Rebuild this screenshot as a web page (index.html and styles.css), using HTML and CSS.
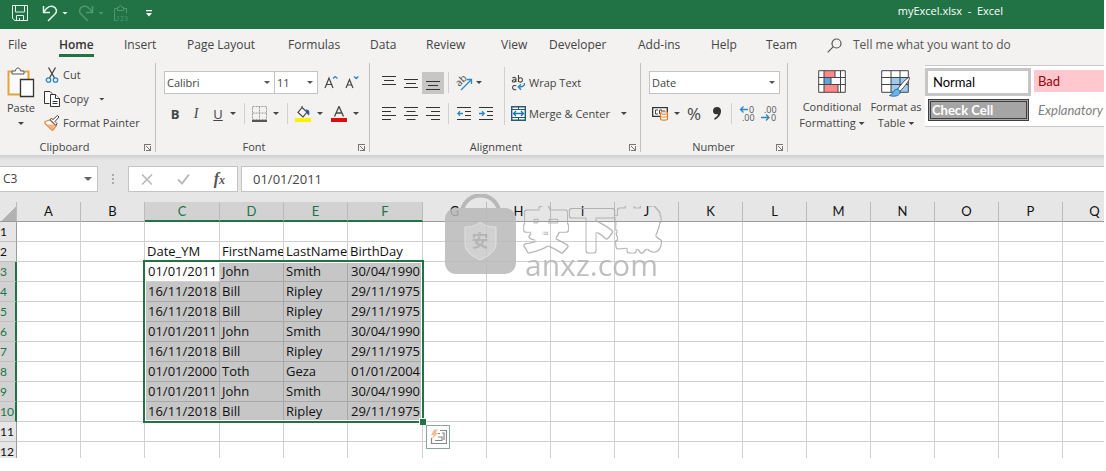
FILE: index.html
```html
<!DOCTYPE html>
<html lang="en">
<head>
<meta charset="utf-8">
<title>myExcel.xlsx - Excel</title>
<link rel="stylesheet" href="styles.css">
</head>
<body>
<div class="app">
  <header class="titlebar">
    <div class="quick">
      <button class="icon-btn" aria-label="Save"><svg width="16" height="16" viewBox="0 0 16 16" fill="none" stroke="#e6f5ec"><path d="M.5.5h15v15H3L.5 13.500z"/><path d="M3.500.500v6.500h9V.500M4.500 15.500v-5h7v5M7.500 13v2.500"/></svg></button>
      <button class="icon-btn undo" aria-label="Undo"><svg width="16" height="17" viewBox="0 0 16 17" fill="none" stroke="#e6f5ec" stroke-width="1.500"><path d="M1.500 1v6.500H8M1.500 7.500C4.500 2.500 8 .500 11 1.500c3.500 1.200 4.500 5 2 7.500L6 16"/></svg><i class="caret"></i></button>
      <button class="icon-btn redo" aria-label="Redo"><svg width="16" height="17" viewBox="0 0 16 17" fill="none" stroke="#509771" stroke-width="1.500"><path d="M14.500 1v6.500H8M14.500 7.500C11.500 2.500 8 .500 5 1.500 1.500 2.700.500 6.500 3 9l7 7"/></svg><i class="caret"></i></button>
      <button class="icon-btn paste-values" aria-label="Paste values"><svg width="15" height="17" viewBox="0 0 15 17" fill="none" stroke="#509771"><path d="M3.500 3.500h-3v12H3M9.500 3.500h3V8M3.500 5.500v-3H5c0-2.500 3-2.500 3 0h1.500v3z"/><text x="2" y="16" font-family="Open Sans" font-size="7" fill="#509771" stroke="none">123</text></svg></button>
      <button class="icon-btn" aria-label="Customize toolbar"><svg width="6" height="7" viewBox="0 0 6 7" fill="#fff"><path d="M0 0h6v1.200H0zM0 3h6L3 6.500z"/></svg></button>
    </div>
    <h1 class="doc-title">myExcel.xlsx&nbsp; -&nbsp; Excel</h1>
  </header>

  <nav class="tabs">
    <a href="#">File</a><a href="#" class="active">Home</a><a href="#">Insert</a><a href="#">Page Layout</a><a href="#">Formulas</a><a href="#">Data</a><a href="#">Review</a><a href="#">View</a><a href="#">Developer</a><a href="#">Add-ins</a><a href="#">Help</a><a href="#">Team</a>
    <button class="tell-me"><svg width="15" height="15" viewBox="0 0 15 15" fill="none" stroke="#555" stroke-width="1.200"><circle cx="9.500" cy="5.500" r="4.500"/><path d="M6.300 8.700.700 14.300"/></svg>Tell me what you want to do</button>
  </nav>

  <section class="ribbon">
    <div class="group clipboard">
      <div class="clip-body">
        <button class="big paste"><svg width="28" height="31" viewBox="0 0 28 31"><path d="M5.500 4.500h-4v23H13M17.500 4.500h4V12" fill="none" stroke="#e8a33d" stroke-width="2"/><path d="M3 6h17v6h-8v14H3z" fill="#fafafa"/><path d="M5 7V4h3.500c0-4 5-4 5 0H17v3z" fill="#fff" stroke="#555"/><path d="M13.500 12.500h13v17h-13z" fill="#fff" stroke="#333" stroke-width="1.300"/></svg><span>Paste</span><i class="caret"></i></button>
        <div class="clip-list">
          <button><svg width="16" height="16" viewBox="0 0 16 16" fill="none"><path d="M4.500.500 10.500 11M11.500.500 5.500 11" stroke="#444" stroke-width="1.300"/><circle cx="4.500" cy="13" r="2.200" stroke="#2b88c4" stroke-width="1.300"/><circle cx="11.500" cy="13" r="2.200" stroke="#2b88c4" stroke-width="1.300"/></svg>Cut</button>
          <button><svg width="16" height="16" viewBox="0 0 16 16" fill="#fff" stroke="#333"><path d="M5.500 12.500h-5V.500H6l2 2v2"/><path d="M6.500 3.500h5l4 4v8h-9z"/><path d="M11.500 3.500v4h4M8.500 10.500h5M8.500 12.500h5"/></svg>Copy<i class="caret"></i></button>
          <button><svg width="16" height="16" viewBox="0 0 16 16"><path d="M1 6.500 6 5l6 6-3.500 4.500L1 8.500z" fill="#fff" stroke="#e8873d" stroke-width="1.300"/><path d="M3 9.500h8L8.500 15z" fill="#f4b183"/><path d="m6 4.500 6 6 1-2-2-2 4-4.500-1.500-1.500L9 4.500l-1.500-1z" fill="#fff" stroke="#444"/></svg>Format Painter</button>
        </div>
      </div>
      <footer>Clipboard<i class="launcher"></i></footer>
    </div>

    <div class="group font">
      <div class="rows">
        <div class="row">
          <label class="combo wide"><select aria-label="Font"><option>Calibri</option></select></label><label class="combo narrow"><select aria-label="Font size"><option>11</option></select></label>
          <button class="tool grow" aria-label="Increase font size"><svg width="14" height="14" viewBox="0 0 14 14" fill="none"><path d="m1 12 4-10 4 10M2.500 8.500h5" stroke="#444" stroke-width="1.200"/><path d="m9 2.500 2.200-2 2.200 2" stroke="#2b88c4" stroke-width="1.300"/></svg></button>
          <button class="tool" aria-label="Decrease font size"><svg width="14" height="14" viewBox="0 0 14 14" fill="none"><path d="m1 12 3.500-8.500L8 12M2.300 9h4.400" stroke="#444" stroke-width="1.200"/><path d="m9 .500 2.200 2 2.200-2" stroke="#2b88c4" stroke-width="1.300"/></svg></button>
        </div>
        <div class="row font-tools">
          <button class="tool bold">B</button><button class="tool italic">I</button><button class="tool under">U</button><i class="caret"></i><i class="rule"></i>
          <button class="tool" aria-label="Borders"><svg width="15" height="16" viewBox="0 0 15 16" fill="none"><path d="M.500.500h14v13H.500zM7.500.500v13M.500 7h14" stroke="#999" stroke-dasharray="2 1"/><path d="M0 15h15" stroke="#222" stroke-width="1.500"/></svg></button><i class="caret"></i><i class="rule"></i>
          <button class="tool" aria-label="Fill color"><svg width="16" height="16" viewBox="0 0 16 16" fill="none"><path d="M7 1.500 3 6.500l5 4.500 4-5-5-4.500V0" stroke="#444" stroke-width="1.200"/><path d="M11 3.500c3 0 4 2 3 6-2-1-2.500-3-3-6z" fill="#245a94"/><path fill="#ffef00" d="M0 12h16v4H0z"/></svg></button><i class="caret"></i>
          <button class="tool" aria-label="Font color"><svg width="16" height="16" viewBox="0 0 16 16" fill="none"><path d="m3.500 10.500 4.500-10 4.500 10M5 7h6" stroke="#444" stroke-width="1.300"/><path fill="#e00b0b" d="M0 12h16v4H0z"/></svg></button><i class="caret"></i>
        </div>
      </div>
      <footer>Font<i class="launcher"></i></footer>
    </div>

    <div class="group alignment">
      <div class="align-body">
        <div class="rows">
          <div class="row align-tools">
            <button class="tool" aria-label="Top align"><svg class="lines" viewBox="0 0 14 14"><path d="M0 .500h14M2 4.500h10M0 8.500h14"/></svg></button>
            <button class="tool" aria-label="Middle align"><svg class="lines" viewBox="0 0 14 14"><path d="M0 3.500h14M2 7.500h10M0 11.500h14"/></svg></button>
            <button class="tool on" aria-label="Bottom align"><svg class="lines" viewBox="0 0 14 14"><path d="M0 5.500h14M2 9.500h10M0 13.500h14"/></svg></button>
            <i class="rule"></i>
            <button class="tool" aria-label="Orientation"><svg width="17" height="17" viewBox="0 0 17 17" fill="none"><text x="0" y="11" transform="rotate(-45 4 8)" font-family="Open Sans" font-size="10" fill="#444">ab</text><path d="M5 16 15 6M11 5.500h4.500V10" stroke="#2b88c4" stroke-width="1.300"/></svg></button><i class="caret"></i>
          </div>
          <div class="row align-tools">
            <button class="tool" aria-label="Align left"><svg class="lines" viewBox="0 0 14 14"><path d="M0 .500h14M0 4.500h9M0 8.500h14M0 12.500h9"/></svg></button>
            <button class="tool" aria-label="Center"><svg class="lines" viewBox="0 0 14 14"><path d="M0 .500h14M2.500 4.500h9M0 8.500h14M2.500 12.500h9"/></svg></button>
            <button class="tool" aria-label="Align right"><svg class="lines" viewBox="0 0 14 14"><path d="M0 .500h14M5 4.500h9M0 8.500h14M5 12.500h9"/></svg></button>
            <i class="rule"></i>
            <button class="tool" aria-label="Decrease indent"><svg class="lines" viewBox="0 0 14 14"><path d="M0 .500h14M8 4.500h6M8 8.500h6M0 12.500h14"/><path class="blue" d="M6 6.500H1M3 4.200.800 6.500 3 8.800"/></svg></button>
            <button class="tool" aria-label="Increase indent"><svg class="lines" viewBox="0 0 14 14"><path d="M0 .500h14M8 4.500h6M8 8.500h6M0 12.500h14"/><path class="blue" d="M0 6.500h5M3 4.200l2.200 2.300L3 8.800"/></svg></button>
          </div>
        </div>
        <div class="rows wraps">
          <button class="row labelled"><svg width="15" height="16" viewBox="0 0 15 16" fill="none"><g stroke="#444" stroke-width="1.100"><path d="M1.500 3c1.500-1 3.500-.800 3.500 1v3M5 4.500c-5 0-4 2.500-2.500 2.500S5 6 5 5"/><path d="M7.500 0v7M7.500 4c1-2 4-1.500 4 1s-3 2.800-4 1M5.300 10.800c-5-1.800-5 5.200 0 3.700"/></g><path d="M13.500 8c.5 3-2 4-6 4M10 9.300 7.300 12 10 14.700" stroke="#2b88c4" stroke-width="1.400"/></svg>Wrap Text</button>
          <button class="row labelled"><svg width="15" height="15" viewBox="0 0 15 15" fill="none"><path d="M.700.700h13.600v13.600H.700z" fill="#fff" stroke="#245a74" stroke-width="1.400"/><path d="M1 3.500h13M1 11.500h13M7.500 1v2.500M7.500 11.500V14" stroke="#245a74"/><path d="M2.500 7.500h10M5 5 2.500 7.500 5 10M10 5l2.500 2.500L10 10" stroke="#1874b8" stroke-width="1.400"/></svg>Merge &amp; Center<i class="caret"></i></button>
        </div>
      </div>
      <footer>Alignment<i class="launcher"></i></footer>
    </div>

    <div class="group number">
      <div class="rows">
        <div class="row"><label class="combo full"><select aria-label="Number format"><option>Date</option></select></label></div>
        <div class="row number-tools">
          <button class="tool" aria-label="Accounting format"><svg width="17" height="15" viewBox="0 0 17 15" fill="none"><path d="M.700 1.700h14.600v8.600H.700z" fill="#fff" stroke="#333" stroke-width="1.300"/><path d="M6 4H3.500v4H6M7.500 8V4H10v4M12 4v3" stroke="#444"/><path d="M8.500 7v6c0 1.500 7 1.500 7 0V7" fill="#fff" stroke="#e07b28" stroke-width="1.200"/><ellipse cx="12" cy="7" rx="3.500" ry="1.300" fill="#fff" stroke="#e07b28"/><path d="M8.500 10c0 1.500 7 1.500 7 0" stroke="#e07b28"/></svg></button><i class="caret"></i>
          <button class="tool percent">%</button>
          <button class="tool" aria-label="Comma style"><svg width="8" height="13" viewBox="0 0 8 13"><path d="M4 0c2.500 0 4 1.500 4 4 0 4-2.500 7-6.500 9v-2C4 9.500 5 8.500 5 7 2 8 0 6.500 0 4c0-2.500 1.500-4 4-4z" fill="#333"/></svg></button>
          <i class="rule"></i>
          <button class="tool" aria-label="Increase decimal"><svg width="17" height="17" viewBox="0 0 17 17" fill="none"><g font-family="Open Sans" font-size="9" fill="#555"><text x="10" y="8">0</text><text x="3" y="16">.00</text></g><path d="M9 4.500H1.500M4.500 1.500l-3 3 3 3" stroke="#2b88c4" stroke-width="1.300"/></svg></button>
          <button class="tool" aria-label="Decrease decimal"><svg width="17" height="17" viewBox="0 0 17 17" fill="none"><g font-family="Open Sans" font-size="9" fill="#555"><text x="3" y="8">.00</text><text x="10" y="16">0</text></g><path d="M0 12.500h8M5 9.500l3 3-3 3" stroke="#2b88c4" stroke-width="1.300"/></svg></button>
        </div>
      </div>
      <footer>Number<i class="launcher"></i></footer>
    </div>

    <div class="group styles">
      <button class="big cond"><svg width="28" height="23" viewBox="0 0 28 27"><path d="M.500.500h27v22H.500z" fill="#fff"/><path d="M6 1h11v6H6zM6 15h14v7H6z" fill="#f88"/><path d="M6 8h7v6H6z" fill="#5ba5de"/><path d="M.700.700h26.600v21.600H.700zM6 .500v22M22.500.500v22M.500 7.500h27M.500 14.500h27M17 1v6.500M13 7.500v7M20 14.500v8" fill="none" stroke="#444"/></svg><span>Conditional<br>Formatting <i class="caret"></i></span></button>
      <button class="big table-btn"><svg width="30" height="27" viewBox="0 0 30 27"><path d="M.500.500h27v22H.500z" fill="#fff"/><path d="M10 8h17v14H10z" fill="#9bcbf0"/><path d="M.700.700h26.600v21.600H.700zM10 .500v22M19 .500v22M.500 7.500h27M.500 14.500h27" fill="none" stroke="#444"/><path d="M28.500 7.500c1.500 1-7 12-10 14l-2-2c2-3.500 10-13 12-12z" fill="#fff" stroke="#444"/><path d="M16 19c2 .5 3.500 2 3 4-1 3-6 4-10.500 2.500C12 25 12 19.500 16 19z" fill="#6fb3e8" stroke="#2070a8"/></svg><span>Format as<br>Table <i class="caret"></i></span></button>
      <div class="gallery">
        <button class="style normal">Normal</button><button class="style bad">Bad</button>
        <button class="style check">Check Cell</button><button class="style expl">Explanatory Text</button>
      </div>
    </div>
  </section>

  <section class="formula-bar">
    <label class="name-box"><input aria-label="Name box" value="C3"><i class="caret"></i></label>
    <i class="dots"></i>
    <div class="fx-box">
      <button aria-label="Cancel"><svg width="12" height="11" viewBox="0 0 12 11" stroke="#bbb" stroke-width="1.600"><path d="m1 .500 10 10M11 .500l-10 10"/></svg></button>
      <button aria-label="Enter"><svg width="13" height="11" viewBox="0 0 13 11" fill="none" stroke="#bbb" stroke-width="2"><path d="m1 5.500 4 4 7-9"/></svg></button>
      <button class="fx" aria-label="Insert function">f<small>x</small></button>
    </div>
    <input class="formula" aria-label="Formula" value="01/01/2011">
  </section>

  <main class="sheet">
    <div class="viewport"><table id="grid"></table></div>
    <div class="selection"></div>
    <button class="quick-analysis" aria-label="Quick analysis"><svg width="17" height="16" viewBox="0 0 17 16" fill="none"><path d="M8 4.500h2M10 1.500h6.500v13h-15V9M12 4h2v7M5 11.500h7V8H8" stroke="#888" stroke-width="1.200"/><path d="M4 .500h4L5.500 4H8l-6 6L3.500 6H1z" fill="#f6bd91"/></svg></button>
    <div class="watermark">
      <svg width="71" height="80" viewBox="0 0 71 80"><path d="M17 16C22-3.500 49-3.500 54 16" fill="none" stroke="#b0b0b0" stroke-width="4"/><rect y="14" width="71" height="66" rx="11" fill="#b9b9b9"/><path d="M35 28c5 4 10 5 16 5v16c0 9-8 13-16 17-8-4-15-8-15-17V33c6 0 11-1 15-5z" fill="#c9c9c9" stroke="#dedede"/><text x="35" y="53" text-anchor="middle" font-family="Noto Sans CJK SC" font-weight="700" font-size="17" fill="#aaa">安</text></svg>
      <div class="wm-text">
        <svg width="144" height="48" viewBox="0 0 144 48"><filter id="outline"><feMorphology in="SourceAlpha" operator="erode" radius="1"/><feComposite in="SourceGraphic" operator="out"/></filter><text x="3" y="40" font-family="Noto Sans CJK SC" font-weight="700" font-size="46" fill="#aaa" stroke="#aaa" stroke-width="5" stroke-linejoin="round" filter="url(#outline)">安下载</text></svg>
        <span class="wm-en">anxz.com</span>
      </div>
    </div>
  </main>
</div>
<script src="sheet.js"></script>
</body>
</html>
```

FILE: styles.css
```css
* { box-sizing: border-box; }
body { margin: 0; background: #fff; color: #444; font: 12px/16px "Open Sans", "Noto Sans", sans-serif; }
button { margin: 0; padding: 0; border: 0; background: none; color: inherit; font: inherit; white-space: nowrap; }
svg { display: block; flex: none; }
.app { height: 100vh; padding: 0 2px 13px 0; display: flex; flex-direction: column; overflow: hidden; }

.caret { flex: none; display: inline-block; width: 6px; height: 3px; background: currentColor; clip-path: polygon(0 0, 100% 0, 50% 100%); }
.rule { flex: none; width: 1px; height: 21px; background: #d0d0d0; }

/* Title bar */
.titlebar { flex: none; height: 29px; display: flex; justify-content: space-between; background: #217346; color: #fff; }
.quick { display: flex; align-items: center; padding: 0 0 3px 12px; }
.icon-btn { display: flex; align-items: center; gap: 4px; }
.undo { margin-left: 14px; color: #fff; }
.redo { margin-left: 10px; color: #509771; }
.paste-values { margin: 0 17px 0 10px; }
.doc-title { margin: 3px 101px 0 0; font-size: 11px; font-weight: 400; line-height: 16px; white-space: nowrap; }

/* Tabs */
.tabs { flex: none; height: 33px; padding: 8px 0 0 8px; display: grid; grid-template-columns: 51px 65px 63px 101px 82px 56px 75px 48px 89px 73px 55px 61px 1fr; align-items: start; background: #f3f2f1; }
.tabs a { justify-self: start; color: #444; text-decoration: none; white-space: nowrap; }
.tabs .active { height: 20px; border-bottom: 3px solid #217346; font-weight: 600; color: #333; }
.tell-me { display: flex; align-items: center; gap: 11px; color: #555; }

/* Ribbon */
.ribbon { flex: none; height: 93px; display: flex; background: #f3f2f1; font-size: 12px; }
.group { flex: none; display: flex; flex-direction: column; justify-content: space-between; margin: 1px 0 3px; border-right: 1px solid #c0c0c0; }
.group footer { position: relative; height: 16px; margin-bottom: -3px; font-size: 11px; line-height: 15px; text-align: center; }
.launcher { position: absolute; right: 4px; bottom: 4px; width: 7px; height: 7px; border: solid #777; border-width: 1px 0 0 1px; }
.launcher::after { content: ""; position: absolute; right: 0; bottom: 0; width: 4px; height: 4px; border: solid #777; border-width: 0 1px 1px 0; background: linear-gradient(45deg, transparent 40%, #777 40% 60%, transparent 60%); }
.clipboard { width: 156px; }
.clipboard footer { padding-right: 26px; }
.font { width: 214px; }
.font footer { padding-right: 17px; }
.alignment { width: 271px; }
.alignment footer { padding-right: 18px; }
.number { width: 147px; }
.number footer { padding-right: 1px; }
.big { display: flex; flex-direction: column; align-items: center; }
.clip-body { display: flex; gap: 8px; padding: 4px 0 0 6px; font-size: 11px; }
.paste { width: 30px; }
.paste span { margin: 2px 0 6px; }
.clip-list { display: flex; flex-direction: column; gap: 8px; }
.clip-list button { display: flex; align-items: center; gap: 3px; height: 16px; }
.clip-list .caret { margin-left: 7px; }
.rows { display: flex; flex-direction: column; gap: 8px; padding-top: 8px; }
.row { display: flex; align-items: center; height: 23px; }
.font .rows, .number .rows { padding-left: 8px; }
.tool { display: flex; align-items: center; justify-content: center; height: 22px; }
.combo { position: relative; height: 23px; border: 1px solid #c4c4c4; background: #fff; }
.combo::after { content: ""; position: absolute; right: 4px; top: 9px; width: 6px; height: 3px; background: #555; clip-path: polygon(0 0, 100% 0, 50% 100%); }
.combo select { width: 100%; height: 100%; padding: 0 0 0 2px; border: 0; appearance: none; background: transparent; color: #444; font: inherit; font-size: 11px; }
.wide { width: 111px; }
.narrow { width: 43px; border-left: 0; }
.full { width: 131px; }
.grow { margin: 0 7px 0 6px; }
.font-tools { gap: 8px; padding-left: 6px; }
.font-tools .tool + .caret { margin-left: -2px; }
.font-tools .rule + .tool { margin-left: -1px; }
.bold { width: 10px; font-size: 13px; font-weight: 700; }
.italic { width: 16px; font: italic 14px/16px "Liberation Serif", serif; }
.under { width: 12px; font-size: 13px; text-decoration: underline; }

.align-body { display: flex; }
.align-tools { padding-left: 8px; }
.align-tools .tool { width: 22px; }
.align-tools .rule { margin: 0 4px; }
.on { background: #c8c6c4; }
.lines { width: 14px; height: 14px; fill: none; stroke: #333; }
.lines .blue { stroke: #2b88c4; stroke-width: 1.3; }
.wraps { margin: 4px 0 0 7px; padding-top: 4px; padding-left: 6px; border-left: 1px solid #d0d0d0; }
.align-tools:first-child .caret { margin-left: 1px; }
.labelled { gap: 3px; font-size: 11px; }
.labelled .caret { margin-left: 8px; }
.number-tools { padding-left: 3px; }
.number-tools .caret { margin: 0 6px 0 5px; }
.percent { width: 16px; margin-right: 11px; font-size: 17px; }
.number-tools .rule { margin: 0 7px 0 10px; }
.number-tools .rule + .tool { margin-right: 5px; }

.styles { flex: 1; min-width: 0; flex-direction: row; border: 0; justify-content: flex-start; font-size: 11px; }
.styles .big { padding-top: 7px; }
.styles .big svg { height: 27px; margin-bottom: 2px; overflow: visible; }
.styles .caret { margin-bottom: 2px; }
.cond { width: 88px; }
.table-btn { width: 40px; }
.gallery { flex: 1; min-width: 0; height: 62px; margin: 2px 0 0 9px; display: grid; grid-template-columns: 104px 1fr; grid-template-rows: 28px 22px; gap: 3px 5px; padding: 2px 0 0; border: 1px solid #c8c8c8; border-right: 0; border-left: 0; background: #fff; overflow: hidden; font-family: Lato, sans-serif; font-size: 13px; }
.style { height: 22px; padding-left: 4px; text-align: left; overflow: hidden; }
.normal { height: 28px; margin-right: -2px; padding-left: 5px; border: 3px solid #c6c6c6; color: #000; background: #fff; }
.bad { margin-top: 2px; background: #ffc7ce; color: #9c0006; }
.check { margin-left: 3px; padding-left: 1px; border: 3px double #3f3f3f; background: #a5a5a5; color: #fff; font-weight: 700; }
.expl { color: #7f7f7f; font-style: italic; }

/* Formula bar */
.formula-bar { flex: none; height: 47px; padding-top: 11px; display: flex; align-items: flex-start; background: linear-gradient(#cfcfcf, #e6e6e6 5px); }
.name-box { display: flex; align-items: center; width: 98px; height: 26px; padding: 0 5px 0 0; border: 1px solid #c4c4c4; border-left: 0; background: #fff; }
.name-box .caret { width: 8px; height: 4px; background: #666; }
.name-box input { flex: 1; min-width: 0; padding: 0 0 0 3px; border: 0; font: inherit; color: #444; }
.dots { width: 2px; height: 11px; margin: 8px 14px 0; background: repeating-linear-gradient(#aaa 0 2px, transparent 2px 4px); }
.fx-box { display: flex; align-items: center; justify-content: space-around; width: 110px; height: 26px; border: 1px solid #c4c4c4; background: #fff; }
.fx { font: italic 700 16px/20px "Liberation Serif", serif; color: #555; }
.fx small { font-size: 12px; }
.formula { flex: 1; min-width: 0; height: 26px; margin-left: 3px; padding: 0 0 0 11px; border: 1px solid #c4c4c4; border-right: 0; color: #444; font: inherit; font-size: 13px; }

/* Sheet */
.sheet { position: relative; flex: 1; min-height: 0; background: #fff; font-size: 13px; }
.viewport { height: 100%; overflow: hidden; }
#grid { width: 1127px; table-layout: fixed; border-collapse: separate; border-spacing: 0; color: #111; }
#grid th, #grid td { height: 20px; padding: 0 2px; border: solid #d0d0d0; border-width: 0 1px 1px 0; font-weight: 400; line-height: 19px; overflow: hidden; white-space: nowrap; text-align: left; }
#grid th { font-family: Lato, sans-serif; }
#grid thead th { padding: 0; background: #e6e6e6; border-color: #bbb; border-bottom-color: #9b9b9b; text-align: center; }
#grid tbody th { padding: 0; background: #e6e6e6; border-right-color: #9b9b9b; border-bottom-color: #c0c0c0; font-size: 12px; }
#grid thead .hot { background: #d2d2d2; color: #217346; border-bottom: 2px solid #217346; line-height: 18px; }
#grid tbody .hot { background: #d2d2d2; color: #217346; border-right: 2px solid #217346; }
#grid .corner { background: linear-gradient(135deg, #e6e6e6 60%, #b2b2b2 60%); }
#grid .picked { background: #c6c6c6; border-color: #a8a8a8; }
#grid .date { text-align: right; padding-right: 2px; }
#grid .spill { padding-right: 0; }
.selection { position: absolute; left: 143px; top: 58px; width: 281px; height: 163px; border: 2px solid #217346; box-shadow: inset 0 0 0 1px #fff; }
.selection::after { content: ""; position: absolute; right: -4px; bottom: -4px; width: 6px; height: 6px; border: solid #fff; border-width: 1px 0 0 1px; background: #217346; }
.quick-analysis { position: absolute; left: 426px; top: 223px; width: 24px; height: 24px; display: grid; place-items: center; border: 1px solid #86a896; background: #fff; }
.watermark { position: absolute; left: 445px; top: -8px; display: flex; opacity: .85; pointer-events: none; }
.wm-text { display: flex; flex-direction: column; padding: 12px 0 0 4px; }
.wm-en { padding-left: 5px; font: 30px/22px "Open Sans", sans-serif; color: #b5b5b5; }
```

FILE: sheet.js
```js
const columns = ["A", "B", "C", "D", "E", "F", "G", "H", "i", "J", "K", "L", "M", "N", "O", "P", "Q"];
const john = ["01/01/2011", "John", "Smith", "30/04/1990"];
const bill = ["16/11/2018", "Bill", "Ripley", "29/11/1975"];
const toth = ["01/01/2000", "Toth", "Geza", "01/01/2004"];
const data = { 2: ["Date_YM", "FirstName", "LastName", "BirthDay"], 3: john, 4: bill, 5: bill, 6: john, 7: bill, 8: toth, 9: john, 10: bill };
const inRange = (row, col) => row >= 3 && row <= 10 && col >= 2 && col <= 5;

let html = '<colgroup><col style="width:17px">';
columns.forEach((name, col) => { html += `<col style="width:${col === 2 || col === 5 ? 75 : 64}px">`; });
html += '</colgroup><thead><tr><th class="corner"></th>';
columns.forEach((name, col) => { html += `<th class="${col >= 2 && col <= 5 ? "hot" : ""}">${name}</th>`; });
html += "</tr></thead><tbody>";
for (let row = 1; row <= 12; row++) {
  html += `<tr><th class="${row >= 3 && row <= 10 ? "hot" : ""}">${row}</th>`;
  columns.forEach((name, col) => {
    const text = data[row] ? data[row][col - 2] || "" : "";
    const classes = [];
    if (inRange(row, col) && !(row === 3 && col === 2)) classes.push("picked");
    if (inRange(row, col) && (col === 2 || col === 5)) classes.push("date");
    if (row === 2) classes.push("spill");
    html += `<td class="${classes.join(" ")}">${text}</td>`;
  });
  html += "</tr>";
}
document.getElementById("grid").innerHTML = html + "</tbody>";
```
